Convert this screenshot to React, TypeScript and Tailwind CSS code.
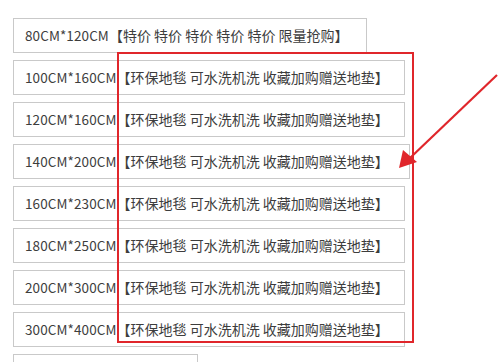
const SIZES = [
  { size: "100CM*160CM", w: "w-[392px]", gap: "" },
  { size: "120CM*160CM", w: "w-[392px]", gap: "" },
  { size: "140CM*200CM", w: "w-[397px]", gap: " " },
  { size: "160CM*230CM", w: "w-[392px]", gap: "" },
  { size: "180CM*250CM", w: "w-[392px]", gap: "" },
  { size: "200CM*300CM", w: "w-[392px]", gap: "" },
  { size: "300CM*400CM", w: "w-[392px]", gap: "" },
];

const font = { fontFamily: '"Noto Sans CJK SC", "Noto Sans", sans-serif' };

export default function App() {
  return (
    <div className="relative w-[499px] h-[362px] overflow-hidden bg-white" style={font}>
      <div className="flex flex-col gap-[7px] pt-[18px] pl-[13px]">
        <div className="w-[354px] h-[35px] border border-[#c9c9c9] flex items-center pl-[11px] text-[14px] text-[#3d3d3d] whitespace-pre">
          <span className="text-[13.5px] tracking-[0.1px]">80CM*120CM</span>【特价 特价 特价 特价 特价 限量抢购】
        </div>
        {SIZES.map((s) => (
          <div
            key={s.size}
            className={`${s.w} h-[35px] border border-[#c9c9c9] flex items-center pl-[11px] text-[14px] text-[#3d3d3d] whitespace-pre`}
          >
            <span className="text-[13.5px] tracking-[0.1px]">{s.size}</span>
            {s.gap}【环保地毯 可水洗机洗 收藏加购赠送地垫】
          </div>
        ))}
        <div className="w-[185px] h-[35px] border border-[#c9c9c9]" />
      </div>

      {/* highlight box */}
      <div className="absolute left-[117px] top-[52px] w-[297px] h-[291px] border-2 border-[#e0262b]" />

      {/* arrow */}
      <svg className="absolute left-0 top-0" width="499" height="362" viewBox="0 0 499 362">
        <line x1="497" y1="75" x2="410" y2="158" stroke="#e0262b" strokeWidth="2.2" />
        <polygon points="399,168 403,150 417,162" fill="#e0262b" />
      </svg>
    </div>
  );
}
